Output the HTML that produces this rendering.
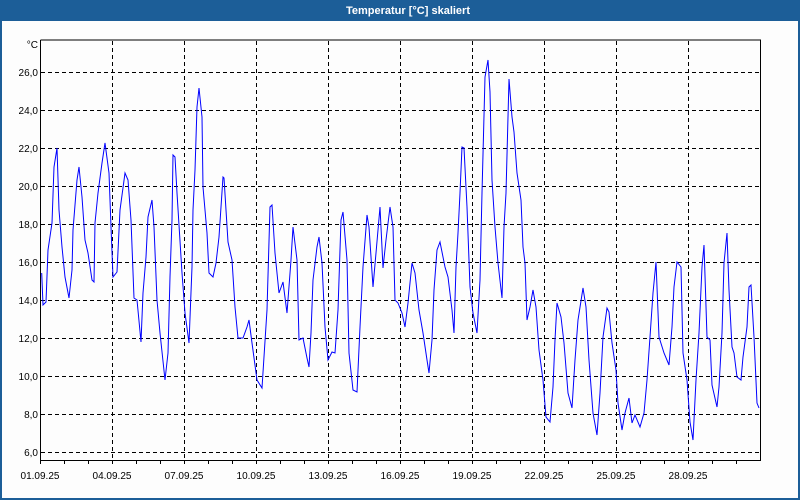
<!DOCTYPE html>
<html><head><meta charset="utf-8"><style>
body{margin:0;width:800px;height:500px;overflow:hidden;background:#1c5e98;}
svg{display:block}
</style></head><body>
<svg width="800" height="500" xmlns="http://www.w3.org/2000/svg" font-family="Liberation Sans, DejaVu Sans, sans-serif">
<rect x="0" y="0" width="800" height="500" fill="#1c5e98"/>
<rect x="2" y="21" width="796" height="477" fill="#fdfdfd"/>
<text x="408" y="14" fill="#fff" font-size="11" font-weight="bold" text-anchor="middle">Temperatur [°C] skaliert</text>
<g stroke="#000" stroke-width="1" stroke-dasharray="4,3" fill="none">
<path d="M41 72.5H760M41 110.5H760M41 148.5H760M41 186.5H760M41 224.5H760M41 262.5H760M41 300.5H760M41 338.5H760M41 376.5H760M41 414.5H760M41 452.5H760"/>
<path d="M112.5 41V460M184.5 41V460M256.5 41V460M328.5 41V460M400.5 41V460M472.5 41V460M544.5 41V460M616.5 41V460M688.5 41V460"/>
</g>
<path d="M40.5 40V460.5H760.5V40H40.5" stroke="#000" fill="none"/>
<path d="M64.5 460V464M88.5 460V464M112.5 460V464M136.5 460V464M160.5 460V464M184.5 460V464M208.5 460V464M232.5 460V464M256.5 460V464M280.5 460V464M304.5 460V464M328.5 460V464M352.5 460V464M376.5 460V464M400.5 460V464M424.5 460V464M448.5 460V464M472.5 460V464M496.5 460V464M520.5 460V464M544.5 460V464M568.5 460V464M592.5 460V464M616.5 460V464M640.5 460V464M664.5 460V464M688.5 460V464M712.5 460V464M736.5 460V464M40.5 460V464" stroke="#000"/>
<g font-size="10" fill="#000" text-anchor="end">
<text x="38" y="48">°C</text>
<text x="38" y="76">26,0</text><text x="38" y="114">24,0</text><text x="38" y="152">22,0</text><text x="38" y="190">20,0</text><text x="38" y="228">18,0</text><text x="38" y="266">16,0</text><text x="38" y="304">14,0</text><text x="38" y="342">12,0</text><text x="38" y="380">10,0</text><text x="38" y="418">8,0</text><text x="38" y="456">6,0</text>
</g>
<g font-size="10" fill="#000" text-anchor="middle">
<text x="40" y="479">01.09.25</text><text x="112" y="479">04.09.25</text><text x="184" y="479">07.09.25</text><text x="256" y="479">10.09.25</text><text x="328" y="479">13.09.25</text><text x="400" y="479">16.09.25</text><text x="472" y="479">19.09.25</text><text x="544" y="479">22.09.25</text><text x="616" y="479">25.09.25</text><text x="688" y="479">28.09.25</text>
</g>
<polyline fill="none" stroke="#0000ff" stroke-width="1" points="
41.7,273 43,305 46,302 48,250 52,223 54,167 57,148 59,210 62,247 65,277 69,298 72,270 73,230 77,180 79,167 82,197 85,240 88,253 92,280 94,282 95,223 98,193 102,163 105,143 109,173 111,227 113,277 117,272 120,210 125,173 128,180 131,220 134,298 137,300 141,342 143,293 146,257 148,217 152,200 154,227 157,300 160,333 165,380 168,353 170,277 172,220 173,155 175,157 177,193 182,273 185,313 189,343 192,267 193,210 195,170 197,107 199,88 202,117 203,187 207,233 209,273 213,277 216,263 219,237 223,177 224,178 228,242 232,260 235,307 238,338 243,338 247,327 249,320 252,343 257,380 262,388 267,310 270,207 272,205 275,253 279,293 283,282 287,313 291,260 293,227 297,260 299,340 303,338 307,358 309,367 311,333 313,280 317,247 319,237 322,263 325,327 328,360 332,352 335,353 338,310 341,220 343,212 347,260 349,353 353,390 357,392 360,327 363,267 367,215 369,227 373,287 376,253 380,207 383,268 386,240 390,207 393,227 395,300 398,303 402,313 405,327 408,303 412,263 415,273 419,310 423,333 427,360 429,373 432,340 434,290 437,250 440,242 445,267 448,277 452,310 454,333 456,267 458,233 460,193 462,147 464,148 467,207 470,287 473,313 477,333 480,280 482,193 485,77 488,60 490,92 492,180 495,227 498,263 502,298 504,227 506,193 509,79 512,117 514,132 517,173 521,200 523,247 525,263 527,320 530,307 533,290 536,307 539,350 543,380 546,417 550,422 553,387 555,340 557,303 561,317 564,343 568,393 572,408 575,360 578,320 583,288 586,307 589,360 593,413 597,435 600,393 603,337 607,308 609,312 612,343 616,370 618,403 622,430 625,413 629,398 632,423 635,415 640,427 644,413 647,380 650,337 653,293 656,262 659,337 664,353 669,365 672,327 674,287 677,262 681,267 683,353 687,380 690,422 693,440 696,380 699,333 702,267 704,245 707,337 710,340 712,385 717,407 719,387 722,333 724,263 727,233 729,290 732,347 734,353 737,377 741,380 743,357 747,327 749,287 751,285 754,337 757,403 759,408"/>
</svg>
</body></html>
